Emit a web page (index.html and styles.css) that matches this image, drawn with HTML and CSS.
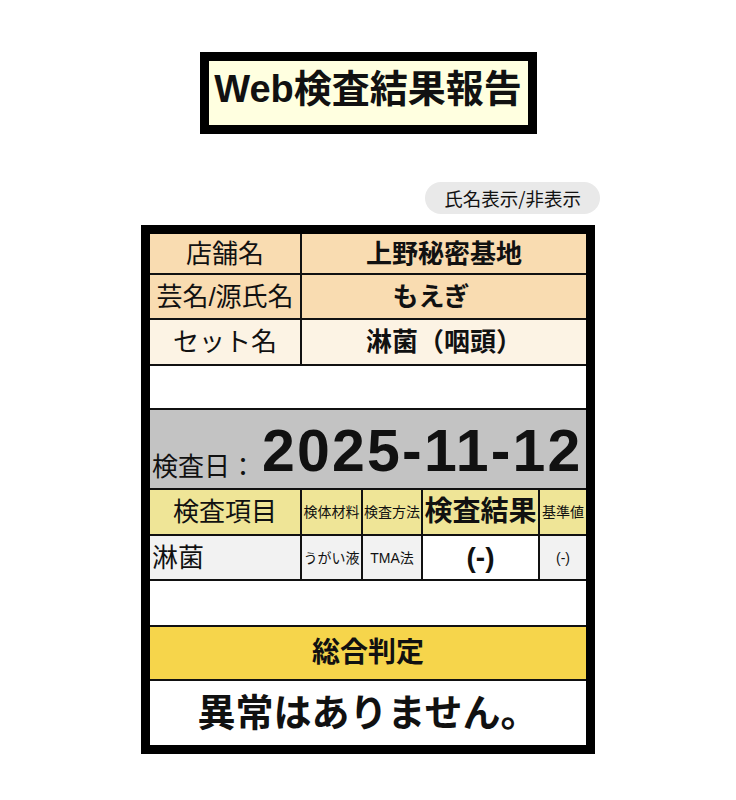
FILE: index.html
```html
<!DOCTYPE html>
<html lang="ja">
<head>
<meta charset="utf-8">
<link rel="stylesheet" href="styles.css">
</head>
<body>
<div class="page">
  <h1 class="title">Web検査結果報告</h1>
  <div class="toolbar"><button class="toggle" type="button">氏名表示/非表示</button></div>
  <div class="report">
    <div class="cell label peach">店舗名</div>
    <div class="cell value peach span4 bold">上野秘密基地</div>
    <div class="cell label peach">芸名/源氏名</div>
    <div class="cell value peach span4 bold">もえぎ　</div>
    <div class="cell label cream">セット名</div>
    <div class="cell value cream span4 bold">淋菌（咽頭）</div>
    <div class="cell blank span5"></div>
    <div class="cell date span5">
      <span class="date-label">検査日：</span><span class="date-value">2025-11-12</span>
    </div>
    <div class="cell head big">検査項目</div>
    <div class="cell head small">検体材料</div>
    <div class="cell head small">検査方法</div>
    <div class="cell head big bold">検査結果</div>
    <div class="cell head small">基準値</div>
    <div class="cell item left big">淋菌</div>
    <div class="cell item small">うがい液</div>
    <div class="cell item small">TMA法</div>
    <div class="cell result bold">(-)</div>
    <div class="cell item small">(-)</div>
    <div class="cell blank span5"></div>
    <div class="cell verdict-head span5 bold">総合判定</div>
    <div class="cell verdict span5 bold">異常はありません。</div>
  </div>
</div>
</body>
</html>
```

FILE: styles.css
```css
* { box-sizing: border-box; }
html, body { margin: 0; padding: 0; background: #ffffff; }
body {
  font-family: "Liberation Sans", "Noto Sans CJK JP", sans-serif;
  color: #111;
}
.page {
  width: 736px;
  display: flex;
  flex-direction: column;
  align-items: center;
  padding-top: 52px;
}
.title {
  margin: 0;
  width: 337px;
  height: 82px;
  border: 9px solid #000;
  background: #ffffe0;
  font-size: 38px;
  font-weight: 700;
  display: flex;
  align-items: center;
  justify-content: center;
  padding-bottom: 8px;
  line-height: 1;
}
.toolbar {
  width: 736px;
  display: flex;
  justify-content: flex-end;
  padding-right: 136px;
  margin-top: 48px;
}
.toggle {
  height: 32px;
  border: none;
  border-radius: 16px;
  background: #e9e9e9;
  color: #111;
  font-family: "Noto Sans CJK JP", sans-serif;
  font-size: 18.5px;
  padding: 0 19px;
  line-height: 1;
}
.report {
  margin-top: 11px;
  width: 454px;
  border: 9px solid #000;
  background: #111;
  display: grid;
  grid-template-columns: 150px 59px 58px 115px 46px;
  grid-template-rows: 39px 43px 44px 42px 78px 44px 43px 44px 52px 64px;
  gap: 2px;
}
.cell {
  display: flex;
  align-items: center;
  justify-content: center;
  background: #fff;
  font-size: 26px;
  line-height: 1;
  white-space: nowrap;
  overflow: hidden;
}
.span4 { grid-column: span 4; }
.span5 { grid-column: span 5; }
.bold { font-weight: 700; }
.peach { background: #f9dcb1; }
.cream { background: #fcf3e4; }
.blank { background: #fff; }
.date {
  background: #c3c3c3;
  justify-content: flex-start;
  align-items: flex-end;
  padding: 0 0 7px 2px;
}
.date-label { font-size: 26px; margin-right: 6px; margin-bottom: 1px; }
.date-value {
  font-family: "Liberation Sans", sans-serif;
  font-weight: 700;
  font-size: 59px;
  letter-spacing: 2.2px;
}
.head { background: #efe597; }
.item { background: #f2f2f2; }
.result { background: #fff; font-size: 28px; }
.big { font-size: 26px; }
.head.bold { font-size: 28px; }
.small { font-size: 14px; }
.head.small:last-child { font-size: 13.5px; }
.left { justify-content: flex-start; padding-left: 2px; }
.verdict-head { background: #f6d54b; font-size: 28px; }
.verdict { background: #fff; font-size: 38px; }
```
